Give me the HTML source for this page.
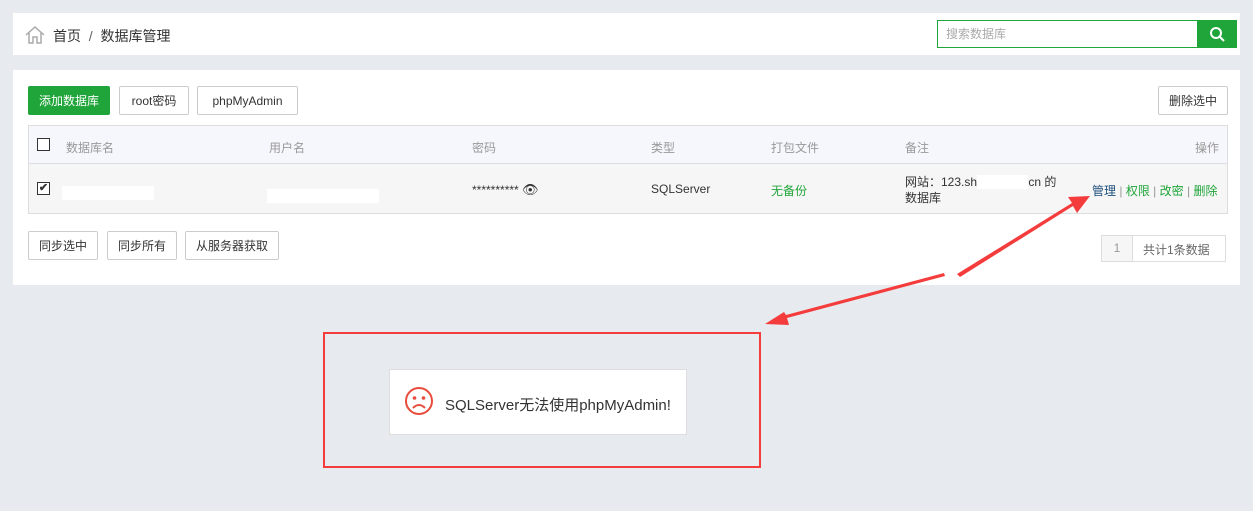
<!DOCTYPE html><html><head><meta charset="utf-8"><style>
body{margin:0;width:1253px;height:511px;background:#e7eaee;font-family:"Liberation Sans","Noto Sans CJK SC",sans-serif;font-size:12px;color:#333;position:relative;overflow:hidden}
.a{position:absolute}
.btn{position:absolute;border:1px solid #ccc;border-radius:2px;background:#fff;height:27px;line-height:27px;text-align:center;font-size:12px;color:#333;box-sizing:border-box}
.h{color:#999}
.cb{position:absolute;width:11px;height:11px;border:1px solid #333;background:#fff}
</style></head><body>
<div class="a" style="left:13px;top:13px;width:1227px;height:42px;background:#fff"></div>
<svg class="a" style="left:24px;top:25px" width="22" height="20" viewBox="0 0 22 20"><path d="M2 10L11 2L20 10M5 8V18H9V12H13V18H17V8" fill="none" stroke="#aaa" stroke-width="1.5"/></svg>
<div class="a" style="left:53px;top:26px;font-size:14px;color:#333">首页 &nbsp;<span style="color:#666">/</span>&nbsp; 数据库管理</div>
<div class="a" style="left:937px;top:20px;width:261px;height:28px;border:1px solid #20a53a;box-sizing:border-box;background:#fff;color:#aaa;line-height:26px;padding-left:8px">搜索数据库</div>
<div class="a" style="left:1198px;top:20px;width:39px;height:28px;background:#20a53a"></div>
<svg class="a" style="left:1209px;top:26px" width="17" height="17" viewBox="0 0 17 17"><circle cx="7" cy="7" r="5" fill="none" stroke="#fff" stroke-width="2"/><path d="M11 11L15 15" stroke="#fff" stroke-width="2"/></svg>

<div class="a" style="left:13px;top:70px;width:1227px;height:215px;background:#fff"></div>
<div class="btn" style="left:28px;top:86px;width:82px;height:29px;line-height:29px;background:#20a53a;border-color:#20a53a;color:#fff">添加数据库</div>
<div class="btn" style="left:119px;top:86px;width:70px;height:29px;line-height:29px">root密码</div>
<div class="btn" style="left:197px;top:86px;width:101px;height:29px;line-height:29px">phpMyAdmin</div>
<div class="btn" style="left:1158px;top:86px;width:70px;height:29px;line-height:29px">删除选中</div>

<div class="a" style="left:28px;top:125px;width:1200px;height:89px;border:1px solid #ddd;box-sizing:border-box"></div>
<div class="a" style="left:29px;top:126px;width:1198px;height:37px;background:#f6f7fd;border-bottom:1px solid #ddd"></div>
<div class="a" style="left:29px;top:164px;width:1198px;height:49px;background:#f6f6f6"></div>
<div class="cb" style="left:37px;top:138px"></div>
<div class="a h" style="left:66px;top:139px">数据库名</div>
<div class="a h" style="left:269px;top:139px">用户名</div>
<div class="a h" style="left:472px;top:139px">密码</div>
<div class="a h" style="left:651px;top:139px">类型</div>
<div class="a h" style="left:771px;top:139px">打包文件</div>
<div class="a h" style="left:905px;top:139px">备注</div>
<div class="a h" style="left:1195px;top:139px">操作</div>
<div class="cb" style="left:37px;top:182px;font-size:11px;line-height:10px;font-weight:bold;text-align:center">✔</div>
<div class="a" style="left:62px;top:186px;width:92px;height:14px;background:#fff"></div>
<div class="a" style="left:267px;top:189px;width:112px;height:14px;background:#fff"></div>
<div class="a" style="left:472px;top:182px">********** <span style="font-size:13px">👁</span></div>
<div class="a" style="left:651px;top:182px">SQLServer</div>
<div class="a" style="left:771px;top:182px;color:#20a53a">无备份</div>
<div class="a" style="left:905px;top:174px;line-height:16px">网站：123.sh<span style="background:#fff;color:#fff">iyunshao.</span>cn 的<br>数据库</div>
<div class="a" style="left:1092px;top:182px;color:#999"><span style="color:#1c4f7c">管理</span> | <span style="color:#20a53a">权限</span> | <span style="color:#20a53a">改密</span> | <span style="color:#20a53a">删除</span></div>

<div class="btn" style="left:28px;top:231px;width:70px;height:29px;line-height:29px">同步选中</div>
<div class="btn" style="left:107px;top:231px;width:70px;height:29px;line-height:29px">同步所有</div>
<div class="btn" style="left:185px;top:231px;width:94px;height:29px;line-height:29px">从服务器获取</div>
<div class="a" style="left:1101px;top:235px;width:125px;height:27px;border:1px solid #ddd;box-sizing:border-box"></div>
<div class="a" style="left:1102px;top:236px;width:30px;height:25px;background:#f6f6f6;border-right:1px solid #ddd;text-align:center;line-height:25px;color:#999">1</div>
<div class="a" style="left:1143px;top:241px;color:#666">共计1条数据</div>

<div class="a" style="left:323px;top:332px;width:438px;height:136px;border:2px solid #f43c3c;box-sizing:border-box"></div>
<div class="a" style="left:389px;top:369px;width:298px;height:66px;background:#fff;border:1px solid #ddd;box-sizing:border-box"></div>
<svg class="a" style="left:404px;top:386px" width="30" height="30" viewBox="0 0 30 30"><circle cx="15" cy="15" r="13" fill="none" stroke="#e84c3d" stroke-width="2"/><circle cx="10.5" cy="12" r="1.8" fill="#e84c3d"/><circle cx="19.5" cy="12" r="1.8" fill="#e84c3d"/><path d="M9 22Q15 16 21 22" fill="none" stroke="#e84c3d" stroke-width="2"/></svg>
<div class="a" style="left:445px;top:394px;font-size:15px;color:#333">SQLServer无法使用phpMyAdmin!</div>

<svg class="a" style="left:0;top:0" width="1253" height="511"><g fill="#f43c3c">
<polygon points="957,274 1072,203 1068,197 1090,196 1077,213 1073,206 960,277"/>
<polygon points="945,276 787,318 789,325 765,324 784,312 786,315 944,273"/>
</g></svg>
</body></html>
